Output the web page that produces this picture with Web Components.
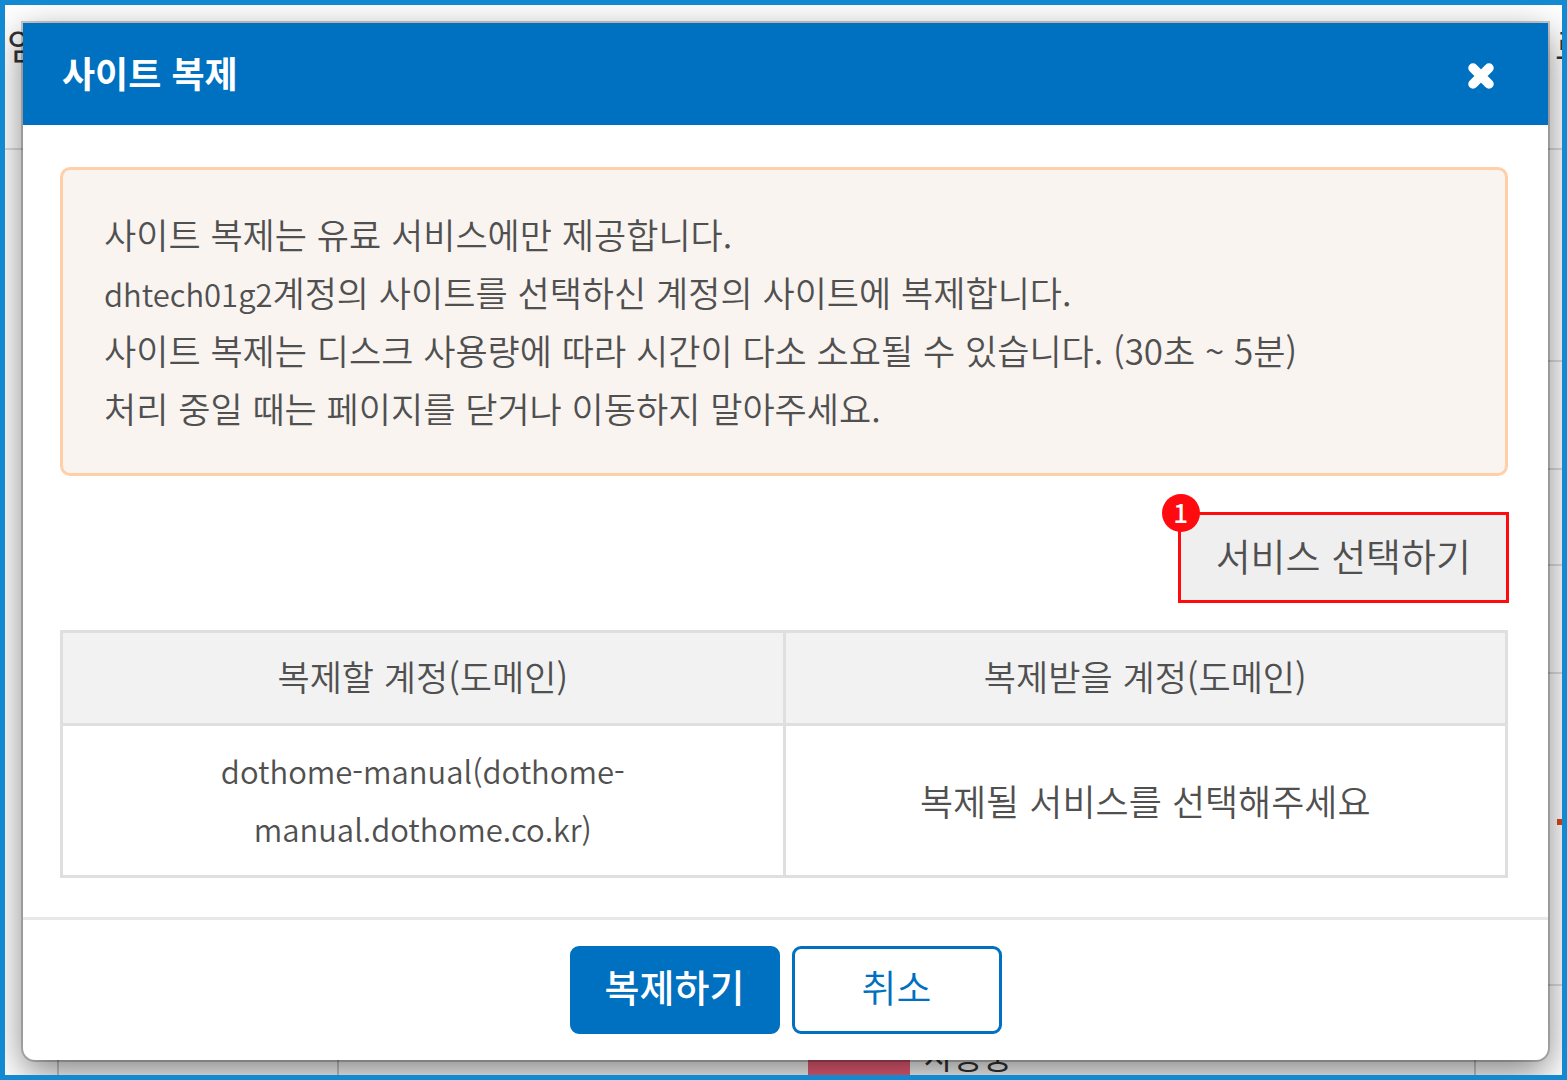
<!DOCTYPE html>
<html lang="ko">
<head>
<meta charset="utf-8">
<title>사이트 복제</title>
<style>
html,body{margin:0;height:100%}
body{font-family:"Noto Sans CJK KR","Noto Sans",sans-serif;font-weight:350;color:#505050;font-size:36px;line-height:58px}
</style>
</head>
<body>
<app-frame>
  <page-backdrop slot="backdrop"></page-backdrop>
  <modal-dialog heading="사이트 복제">
    <notice-box>
      <div>사이트 복제는 유료 서비스에만 제공합니다.</div>
      <div><account-name>dhtech01g2</account-name>계정의 사이트를 선택하신 계정의 사이트에 복제합니다.</div>
      <div>사이트 복제는 디스크 사용량에 따라 시간이 다소 소요될 수 있습니다. (30초 ~ 5분)</div>
      <div>처리 중일 때는 페이지를 닫거나 이동하지 말아주세요.</div>
    </notice-box>
    <service-picker step="1">서비스 선택하기</service-picker>
    <account-table></account-table>
    <action-button slot="footer" kind="primary">복제하기</action-button>
    <action-button slot="footer">취소</action-button>
  </modal-dialog>
</app-frame>
<script>
function define(name, html, setup) {
  const tpl = document.createElement('template');
  tpl.innerHTML = html;
  customElements.define(name, class extends HTMLElement {
    constructor() {
      super();
      this.attachShadow({mode: 'open'}).append(tpl.content.cloneNode(true));
    }
    connectedCallback() { if (setup) setup(this, this.shadowRoot); }
  });
}

define('app-frame', `<style>
:host{display:block;position:relative;box-sizing:border-box;min-height:100vh;border:5px solid #1389d1;padding:18px 14px 14px 18px;background:#fff;overflow:hidden}
</style><slot name="backdrop"></slot><slot></slot>`);

define('page-backdrop', `<style>
:host{position:absolute;inset:0;display:flex;flex-direction:column;color:#333;font-weight:400}
.row{box-sizing:border-box;border-bottom:2px solid #ddd;flex:none}
.top{height:145px;display:flex;justify-content:space-between;padding:10px 0 0 2px}
.top span:last-child{margin-right:-26px}
.left-open{margin-left:50px}
.mark{display:flex;justify-content:flex-end;align-items:center}
.mark i{width:5px;height:6px;margin-bottom:14px;background:#d9481c}
.last{flex:1;display:grid;grid-template-columns:280px 1fr 86px;margin-left:52px;border:solid #ccc;border-width:0 0 0 2px}
.last>div{border-right:2px solid #ccc;display:flex;align-items:flex-end}
.last>div:last-child{border:0}
.state{padding-left:469px;gap:14px}
.state b{width:102px;height:40px;background:#f0607a}
.state span{font-size:32px;line-height:40px}
</style>
<div class="row top"><span>임</span><span>로</span></div>
<div class="row left-open" style="height:212px"></div>
<div class="row left-open" style="height:108px"></div>
<div class="row left-open" style="height:96px"></div>
<div class="row left-open" style="height:108px"></div>
<div class="row left-open mark" style="height:312px"><i></i></div>
<div class="last"><div></div><div class="state"><b></b><span>사용중</span></div><div></div></div>`);

define('modal-dialog', `<style>
:host{display:block;position:relative}
section{background:#fff;border-radius:0 0 12px 12px;box-shadow:0 0 0 2px rgba(0,0,0,.2),0 12px 36px rgba(0,0,0,.5)}
header{display:flex;align-items:center;justify-content:space-between;box-sizing:border-box;background:#0070c0;color:#fff;height:102px;padding:0 50px 4px 39px}
h1{margin:0;font-size:36px;line-height:58px;font-weight:700}
button{display:flex;border:0;background:none;padding:0;margin-top:8px;cursor:pointer}
svg{width:34px;height:34px;display:block}
main{padding:42px 40px 39px 37px;display:flex;flex-direction:column}
footer{border-top:3px solid #e8e8e8;display:flex;justify-content:center;gap:12px;padding:26px 0}
</style><section role="dialog" aria-labelledby="t"><header><h1 id="t"></h1>
<button type="button" aria-label="닫기"><svg viewBox="0 0 34 34"><path d="M9 9 25 25M25 9 9 25" stroke="#fff" stroke-width="9.500" stroke-linecap="round" fill="none"/></svg></button></header>
<main><slot></slot></main><footer><slot name="footer"></slot></footer></section>`,
(el, r) => { r.querySelector('h1').textContent = el.getAttribute('heading'); });

define('notice-box', `<style>
:host{display:block;border:3px solid #ffd0a8;border-radius:10px;background:#f9f4f0;padding:35px 41px 36px;font-size:35px}
</style><slot></slot>`);

define('account-name', `<style>:host{font-size:31px;line-height:31px}</style><slot></slot>`);

define('service-picker', `<style>
:host{display:block;align-self:flex-end;position:relative;margin:36px 0 27px}
button{display:block;box-sizing:border-box;height:91px;border:3px solid #ff0a0e;background:#efefef;color:inherit;font:inherit;font-size:38px;padding:0 35px 5px;margin-right:-1px;cursor:pointer}
span{position:absolute;left:-16px;top:-18px;width:38px;height:38px;border-radius:50%;background:#ff0a0e;color:#fff;font-size:26px;line-height:36px;font-weight:500;text-align:center}
</style><button type="button"><slot></slot></button><span></span>`,
(el, r) => { r.querySelector('span').textContent = el.getAttribute('step'); });

define('account-table', `<style>
:host{display:block}
table{width:100%;border-collapse:collapse;table-layout:fixed}
th,td{border:3px solid #dfdfdf;text-align:center;font-weight:inherit}
th{background:#f2f2f2;padding:14px 40px 18px;font-size:35px}
td{padding:16px 40px 17px}
.domain{font-size:31px}
</style><table><thead><tr><th scope="col">복제할 계정(도메인)</th><th scope="col">복제받을 계정(도메인)</th></tr></thead>
<tbody><tr><td class="domain">dothome-manual(dothome-manual.dothome.co.kr)</td><td>복제될 서비스를 선택해주세요</td></tr></tbody></table>`);

define('action-button', `<style>
:host{display:block}
button{box-sizing:border-box;display:block;width:210px;height:88px;border:3px solid #0070c0;border-radius:9px;background:#fff;color:#0070c0;font:inherit;font-size:38px;padding:0 0 8px;cursor:pointer}
:host([kind=primary]) button{background:#0070c0;color:#fff;font-weight:500}
</style><button type="button"><slot></slot></button>`);
</script>
</body>
</html>
